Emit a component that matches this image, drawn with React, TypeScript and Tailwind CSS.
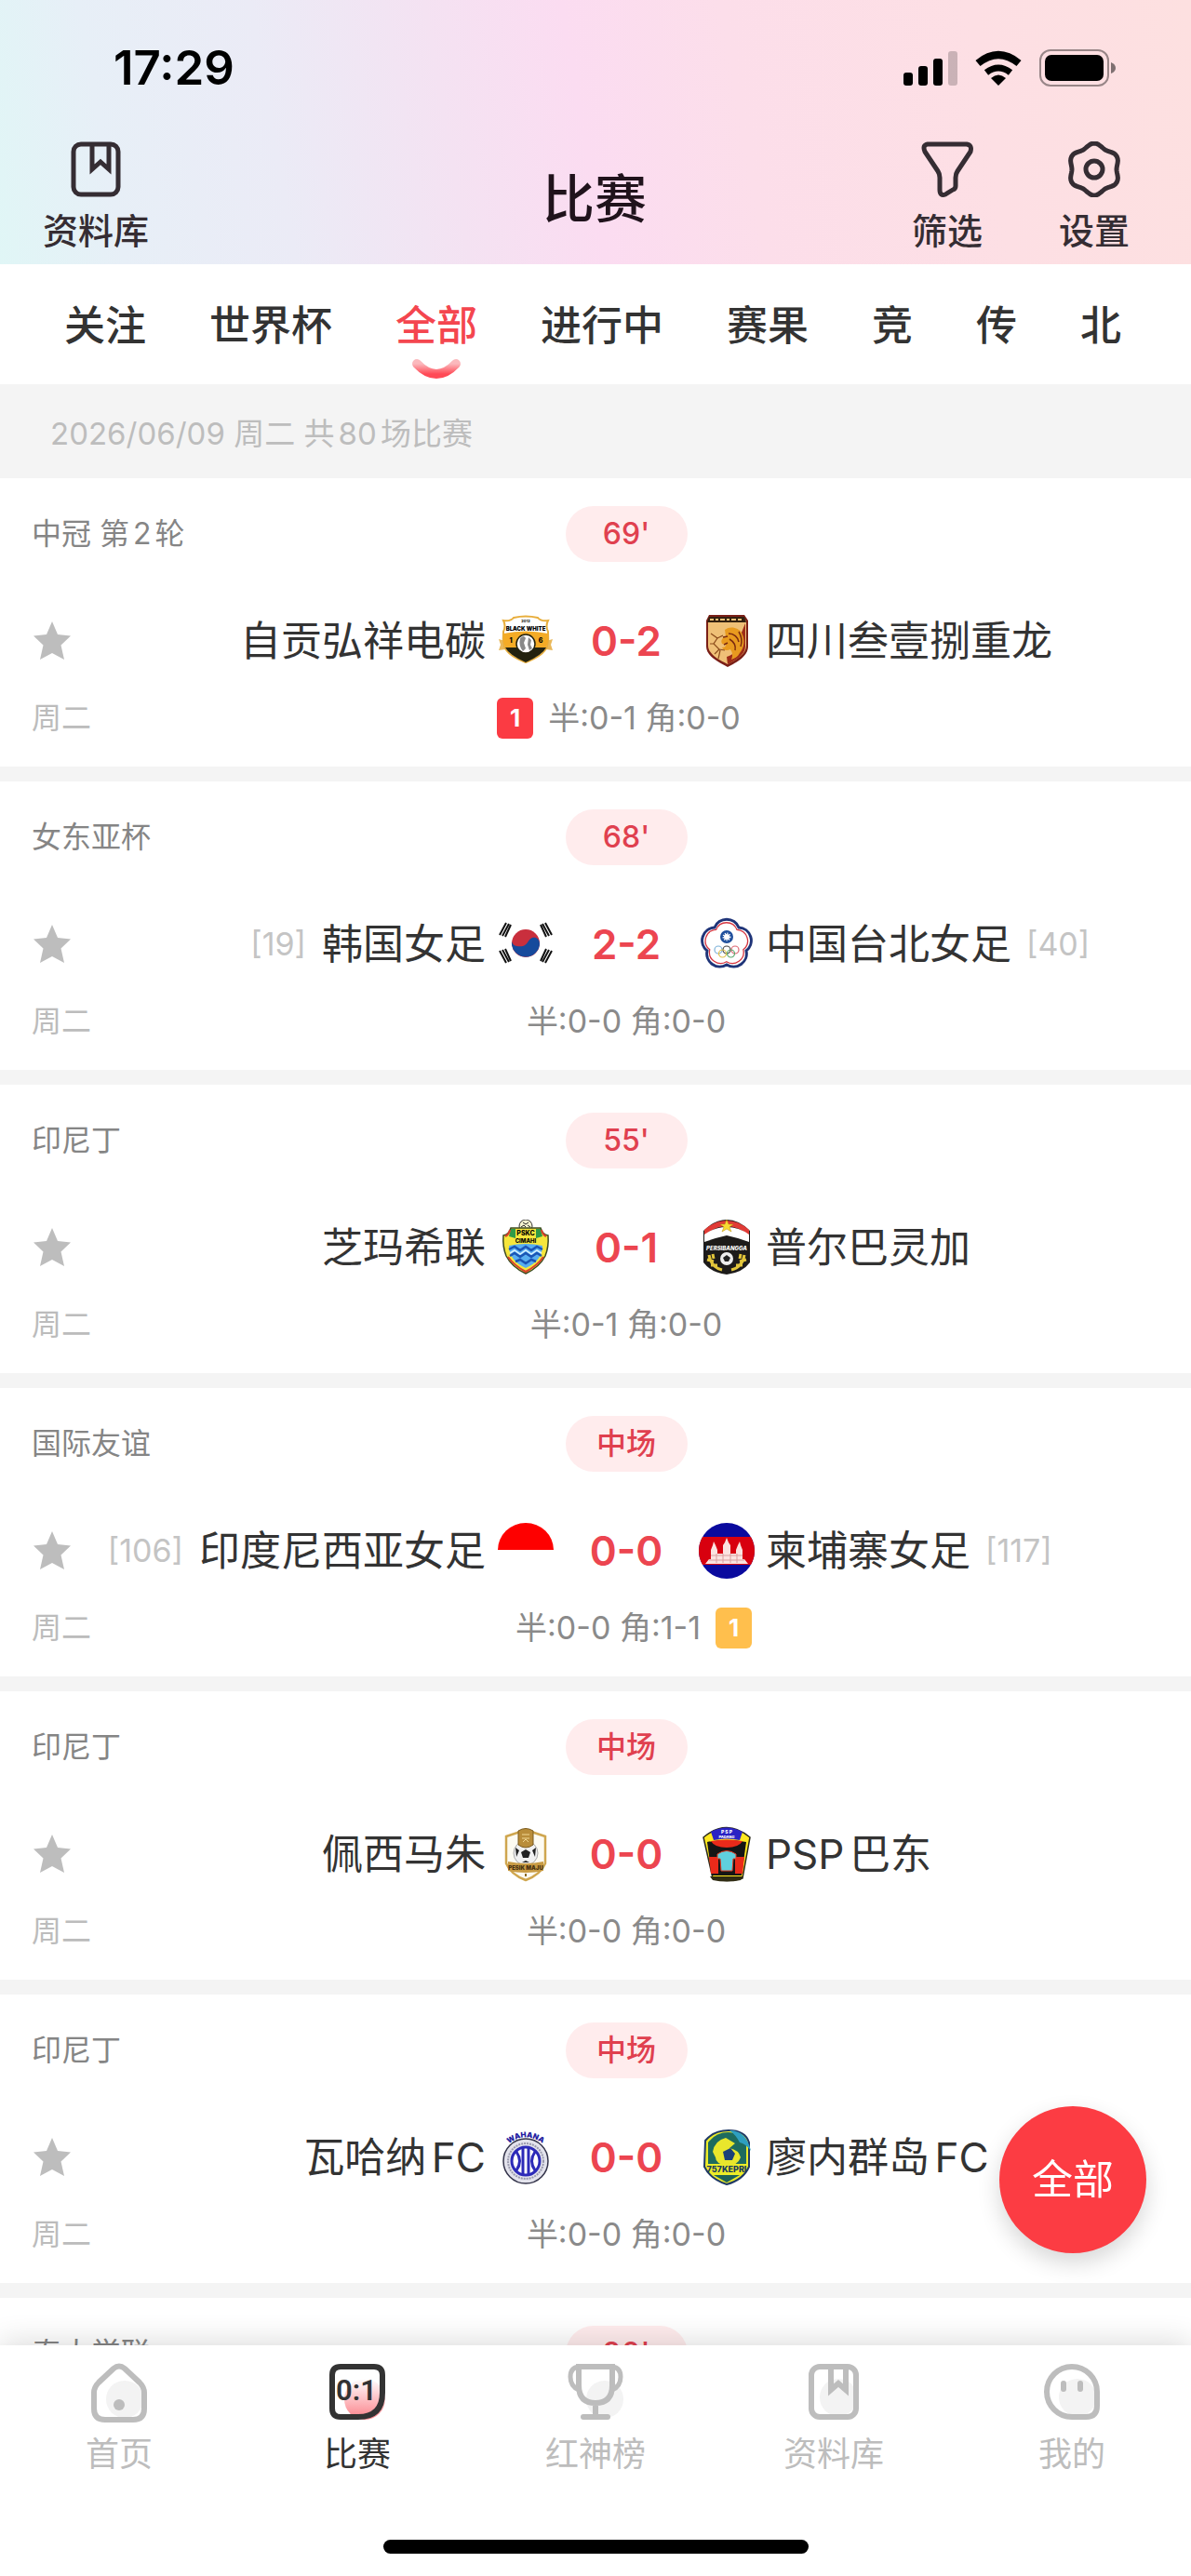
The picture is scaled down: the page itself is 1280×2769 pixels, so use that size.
import { useState } from 'react'
import type { ReactNode } from 'react'

type Team = { name: string; rank?: number; badge: ReactNode }

type Match = {
  league: string
  status: string
  home: Team
  away: Team
  score: string
  detail: string
  redCards?: number
  yellowCards?: number
}

const tabs = ['关注', '世界杯', '全部', '进行中', '赛果', '竞', '传', '北']

/* ---------- Team badges, all drawn on a 60x60 grid ---------- */

const badgeClass = 'size-[60px] shrink-0'

function BlackWhiteBadge() {
  return (
    <svg viewBox="0 0 60 60" className={badgeClass} aria-hidden="true">
      <path d="M1 28l7 2v9l-7 1 2-6zM59 28l-7 2v9l7 1-2-6z" fill="#e9b85a" />
      <path d="M6 8q8 1 11-3 13-3 26 0 3 4 11 3-3 6 0 12 1 8-1 16-4 10-23 17Q11 46 7 36q-2-8-1-16 3-6 0-12z" fill="#fff" stroke="#e8ae3c" strokeWidth="2" />
      <path d="M6 22q24-5 48 0 1 8-2 15H8q-3-7-2-15z" fill="#f4ab26" />
      <path d="M8 37h44q-4 8-22 16Q12 45 8 37z" fill="#23220f" />
      <circle cx="30" cy="33" r="10" fill="#fff" stroke="#23220f" strokeWidth="1.500" />
      <path d="M24 27q4-4 6 0l-2 5 2 6-3 3q-5-6-3-14zM33 26l3 3-1 5 2 4-3 2-2-6z" fill="#8a8a8a" />
      <text x="30" y="10" textAnchor="middle" fontSize="4" fontWeight="700" fontFamily="Inter">2012</text>
      <text x="30" y="19" textAnchor="middle" fontSize="6" fontWeight="900" fontFamily="Inter">BLACK WHITE</text>
      <text x="14" y="32" textAnchor="middle" fontSize="7" fontWeight="800" fontFamily="Inter">1</text>
      <text x="46" y="32" textAnchor="middle" fontSize="7" fontWeight="800" fontFamily="Inter">6</text>
    </svg>
  )
}

function LionBadge() {
  return (
    <svg viewBox="0 0 60 60" className={badgeClass} aria-hidden="true">
      <path d="M11 2h38l4 6v28c0 10-12 17-22 22C21 53 8 46 8 36V8z" fill="#7a1f17" />
      <path d="M12 4h36l3 5v26c0 9-10 15-20 20C21 50 10 44 10 35V9z" fill="#efc077" />
      <path d="M50 11v25c0 9-11 15-19 19l-1-8c8-2 12-8 11-14z" fill="#9d2c18" />
      <path d="M11 4h38l2 6H9z" fill="#33200f" />
      <path d="M12 7h4M18 7h3M23 7h5M30 7h3M35 7h5M42 7h4" stroke="#efc077" strokeWidth="2" />
      <path d="M28 18c6-5 15-2 18 3 4 8 3 16-2 22-2 4-6 6-9 7 2-5 1-8-1-11-4 2-8 1-9-2 3 0 4-1 4-3l-4-1c-2-4 1-7 4-8z" fill="#e89a1f" />
      <path d="M32 22c6 0 10 4 11 9M33 28c5 3 7 7 6 12M43 20c3 5 4 10 2 16M26 26l5-1M27 34l4-2" fill="none" stroke="#7a2a10" strokeWidth="1.500" />
      <path d="M13 22l7 5-4 6 6 6-5 5M20 27l6-3M22 39l6 1M12 33h4M23 40l-2 9" fill="none" stroke="#8a4a1a" strokeWidth="1.200" />
    </svg>
  )
}

function KoreaBadge() {
  return (
    <svg viewBox="0 0 60 60" className={badgeClass} aria-hidden="true">
      <circle cx="30" cy="29" r="15" fill="#c92f3d" />
      <path d="M15 27a15 15 0 1 0 30 3c0-6-4-8-8-7s-5 8-10 9-11 0-12-5z" fill="#164a9c" />
      <g stroke="#111" strokeWidth="2">
        <path d="M2 20l7-13M5 21l7-13M8 22l6-13" />
        <path d="M58 20l-7-13M55 21l-7-13M52 22l-6-13" />
        <path d="M2 37l7 13M5 36l7 13M8 35l6 13" />
        <path d="M58 37l-7 13M55 36l-7 13M52 35l-6 13" />
      </g>
    </svg>
  )
}

function TaipeiBadge() {
  const flower = 'M17 12A14 14 0 0 1 43 12A14 14 0 0 1 51 37A14 14 0 0 1 30 52A14 14 0 0 1 9 37A14 14 0 0 1 17 12z'
  return (
    <svg viewBox="0 0 60 60" className={badgeClass} aria-hidden="true">
      <path d={flower} fill="#fff" stroke="#1f3478" strokeWidth="3" />
      <path d={flower} transform="translate(4 4) scale(.86)" fill="none" stroke="#d5343f" strokeWidth="1.500" />
      <circle cx="30" cy="22" r="7" fill="#1f4f9c" />
      <circle cx="30" cy="22" r="3" fill="#fff" stroke="#fff" strokeWidth="3" strokeDasharray="1 1" />
      <g fill="none" strokeWidth="1.200">
        <circle cx="21" cy="36" r="4" stroke="#7db1d8" />
        <circle cx="30" cy="36" r="4" stroke="#444" />
        <circle cx="39" cy="36" r="4" stroke="#dc6570" />
        <circle cx="25.500" cy="40" r="4" stroke="#e2c24a" />
        <circle cx="34.500" cy="40" r="4" stroke="#5aa86c" />
      </g>
    </svg>
  )
}

function CimahiBadge() {
  return (
    <svg viewBox="0 0 60 60" className={badgeClass} aria-hidden="true">
      <circle cx="30" cy="7" r="7" fill="#f5f3d0" stroke="#333" />
      <path d="M27 3l3 2 3-2M25 8l3-2 2 2M35 8l-3-2" stroke="#222" fill="none" />
      <path d="M14 9h32q2 7 8 8 1 12-3 22-6 12-21 19Q15 51 9 39 5 29 6 17q6-1 8-8z" fill="#f6e63c" stroke="#3c4a22" strokeWidth="1.500" />
      <path d="M14 10h5v10l-7-2zM46 10h-5v10l7-2z" fill="#2f9a48" />
      <path d="M13 11q-1 5-5 7M47 11q1 5 5 7" fill="none" stroke="#d8412c" strokeWidth="2" />
      <path d="M11 40q6 9 19 16 13-7 19-16" fill="none" stroke="#d8412c" strokeWidth="2" />
      <path d="M12 28q18-4 36 0 0 16-18 24-18-8-18-24z" fill="#58aef0" />
      <path d="M12 32l6-3 6 4 6-4 6 4 6-4 6 3M13 39l5-3 6 4 6-4 6 4 6-4 5 3M19 45l5-2 6 4 6-4 5 2" fill="none" stroke="#1b55b5" strokeWidth="2.500" />
      <path d="M13 36l5-3 6 4 6-4 6 4 6-4 5 3" fill="none" stroke="#d8f0ff" strokeWidth="1.500" />
      <text x="30" y="17" textAnchor="middle" fontSize="7" fontWeight="800" fontFamily="Inter">PSKC</text>
      <text x="30" y="25" textAnchor="middle" fontSize="6" fontWeight="800" fontFamily="Inter">CIMAHI</text>
    </svg>
  )
}

function PurbalinggaBadge() {
  return (
    <svg viewBox="0 0 60 60" className={badgeClass} aria-hidden="true">
      <path d="M5 12Q17 0 30 0t25 12v34q-8 11-25 13Q13 57 5 46z" fill="#1d1b1a" />
      <path d="M6 11Q17 1 30 1t24 10v6Q42 7 30 7T6 17z" fill="#e03b36" />
      <path d="M6 16q11-8 24-8t24 8v8l-12-4-12-3-12 3-12 4z" fill="#fff" />
      <path d="M30 0l2 5h5l-4 3 2 5-5-3-5 3 2-5-4-3h5z" fill="#f7dc33" stroke="#b98d10" strokeWidth=".5" />
      <text x="30" y="33" textAnchor="middle" fontSize="6" fontWeight="800" fontFamily="Inter" fontStyle="italic" fill="#fff">PERSIBANGGA</text>
      <circle cx="30" cy="42" r="7" fill="#eee" />
      <path d="M30 38l4 3-2 4h-4l-2-4z" fill="#222" />
      <path d="M11 38q2 13 14 16M15 37l1 5M9 43l7 2M13 49l7 0M49 38q-2 13-14 16M45 37l-1 5M51 43l-7 2M47 49l-7 0" fill="none" stroke="#e2c53a" strokeWidth="3" />
    </svg>
  )
}

function IndonesiaBadge() {
  return (
    <svg viewBox="0 0 60 60" className={badgeClass} aria-hidden="true">
      <path d="M0 29a30 29 0 0 1 60 0z" fill="#fe0000" />
    </svg>
  )
}

function CambodiaBadge() {
  return (
    <svg viewBox="0 0 60 60" className={badgeClass} aria-hidden="true">
      <circle cx="30" cy="30" r="30" fill="#0a0a9e" />
      <path d="M4 15h52q8 15 0 30H4q-8-15 0-30z" fill="#d8000f" />
      <path d="M7 44l4-5h2V29l2-5 1-4 2 4 2 5v4h6V24l2-3 2-5 2 5 2 3v9h6v-4l2-5 2-4 1 4 2 5v10h2l4 5z" fill="#fbe3e0" />
      <path d="M13 35h34M11 40h38M19 33v10M26 33v10M34 33v10M41 33v10" stroke="#d9a0a0" strokeWidth="1" />
    </svg>
  )
}

function MajuBadge() {
  return (
    <svg viewBox="0 0 60 60" className={badgeClass} aria-hidden="true">
      <path d="M30 4l21 7v29q-5 12-21 18Q14 52 9 40V11z" fill="#fdfbf2" stroke="#cfa64f" strokeWidth="2.500" />
      <circle cx="30" cy="29" r="13" fill="#f1f1f1" stroke="#aaa" />
      <path d="M30 25l5 3-2 6h-6l-2-6zM19 23l4 3-3 7M41 23l-4 3 3 7M26 39l4-2 4 2" fill="#222" />
      <path d="M22 5q8-5 16 0v15q-8 6-16 0z" fill="#b98d3a" stroke="#7b5a1c" />
      <path d="M26 9h8M26 13h8M27 17l3-3 3 3" stroke="#f1d793" fill="none" />
      <path d="M11 38q19 4 38 0v10q-19 4-38 0z" fill="#c89b44" />
      <text x="30" y="47" textAnchor="middle" fontSize="6" fontWeight="900" fontFamily="Inter" fill="#4a3210">PESIK MAJU</text>
      <path d="M30 51v3" stroke="#8d6a26" strokeWidth="2" />
    </svg>
  )
}

function PadangBadge() {
  return (
    <svg viewBox="0 0 60 60" className={badgeClass} aria-hidden="true">
      <path d="M5 12Q30-9 55 12l-8 44q-17 5-32 0z" fill="#ffe81f" stroke="#2b2b1c" strokeWidth="1.500" />
      <path d="M13 6Q30-3 47 6l-3 9q-14-3-28 0z" fill="#2a22c4" />
      <text x="30" y="8" textAnchor="middle" fontSize="5" fontWeight="800" fontFamily="Inter" fill="#fff">P S P</text>
      <text x="30" y="13" textAnchor="middle" fontSize="4" fontWeight="800" fontFamily="Inter" fill="#fff">PADANG</text>
      <path d="M9 17q21-4 42 0l-5 36H14z" fill="#151515" />
      <path d="M13 16q17-3 34 0-4 7-17 7t-17-7z" fill="#ea2a1a" />
      <path d="M11 33h10v18h-8zM49 33H39v18h8z" fill="#ea2a1a" />
      <path d="M20 30q10-7 20 0v5h-3l-1 13H24l-1-13h-3z" fill="#5fd0de" stroke="#e23a22" />
      <path d="M12 54h36l-3 4q-15 3-30 0z" fill="#2f2b12" />
    </svg>
  )
}

function WahanaBadge() {
  return (
    <svg viewBox="0 0 60 60" className={badgeClass} aria-hidden="true">
      <circle cx="30" cy="34" r="24" fill="#e3e3ec" stroke="#34344a" strokeWidth="1.500" />
      <circle cx="30" cy="34" r="19" fill="none" stroke="#9a9aae" strokeWidth="2" strokeDasharray="2 1" />
      <circle cx="30" cy="34" r="15" fill="#fff" stroke="#2c2ab8" strokeWidth="3" />
      <path d="M27 20v28M33 20v28M20 24q7 10 0 20M40 24q-7 10 0 20" fill="none" stroke="#2c2ab8" strokeWidth="3" />
      <path id="wahanaArc" d="M5 21Q30-4 55 21" fill="none" />
      <text fontSize="8" fontWeight="900" fontFamily="Inter" fill="#2320a0">
        <textPath href="#wahanaArc" startOffset="50%" textAnchor="middle">WAHANA</textPath>
      </text>
    </svg>
  )
}

function KepriBadge() {
  return (
    <svg viewBox="0 0 60 60" className={badgeClass} aria-hidden="true">
      <path d="M7 12Q16 1 32 1q18 0 22 13v26q-6 14-24 19Q12 53 6 40z" fill="#ecec28" stroke="#203a66" strokeWidth="2" />
      <path d="M10 14Q18 3 32 3q16 1 19 12v22H10z" fill="#1e6b5e" />
      <path d="M33 1q18 0 23 22-6-8-12-9-4-8-11-13z" fill="#2e9fc0" />
      <path d="M15 24q2-12 14-15l10 6-6 5q10 2 12 10-3 9-15 9-12-2-12-9z" fill="#e9e62c" />
      <path d="M26 24l8-4 5 6-3 7h-8z" fill="#1b3f78" />
      <text x="30" y="46" textAnchor="middle" fontSize="9" fontWeight="800" fontFamily="Inter" fill="#173b5c">757KEPRI</text>
      <path d="M16 49h28l-14 8z" fill="#1d6257" />
    </svg>
  )
}

const matches: Match[] = [
  {
    league: '中冠 第2轮',
    status: "69'",
    home: { name: '自贡弘祥电碳', badge: <BlackWhiteBadge /> },
    away: { name: '四川叁壹捌重龙', badge: <LionBadge /> },
    score: '0-2',
    detail: '半:0-1 角:0-0',
    redCards: 1,
  },
  {
    league: '女东亚杯',
    status: "68'",
    home: { name: '韩国女足', rank: 19, badge: <KoreaBadge /> },
    away: { name: '中国台北女足', rank: 40, badge: <TaipeiBadge /> },
    score: '2-2',
    detail: '半:0-0 角:0-0',
  },
  {
    league: '印尼丁',
    status: "55'",
    home: { name: '芝玛希联', badge: <CimahiBadge /> },
    away: { name: '普尔巴灵加', badge: <PurbalinggaBadge /> },
    score: '0-1',
    detail: '半:0-1 角:0-0',
  },
  {
    league: '国际友谊',
    status: '中场',
    home: { name: '印度尼西亚女足', rank: 106, badge: <IndonesiaBadge /> },
    away: { name: '柬埔寨女足', rank: 117, badge: <CambodiaBadge /> },
    score: '0-0',
    detail: '半:0-0 角:1-1',
    yellowCards: 1,
  },
  {
    league: '印尼丁',
    status: '中场',
    home: { name: '佩西马朱', badge: <MajuBadge /> },
    away: { name: 'PSP巴东', badge: <PadangBadge /> },
    score: '0-0',
    detail: '半:0-0 角:0-0',
  },
  {
    league: '印尼丁',
    status: '中场',
    home: { name: '瓦哈纳FC', badge: <WahanaBadge /> },
    away: { name: '廖内群岛FC', badge: <KepriBadge /> },
    score: '0-0',
    detail: '半:0-0 角:0-0',
  },
]

/* ---------- Header icons ---------- */

function BookIcon() {
  return (
    <svg viewBox="0 0 60 60" className="size-[60px]" fill="none" stroke="currentColor" strokeWidth="5" aria-hidden="true">
      <rect x="6" y="3" width="48" height="54" rx="8" />
      <path d="M26 4v26l9-8 9 8V4" strokeWidth="5" />
    </svg>
  )
}

function FilterIcon() {
  return (
    <svg viewBox="0 0 60 60" className="size-[60px]" fill="none" stroke="currentColor" strokeWidth="5" strokeLinejoin="round" aria-hidden="true">
      <path d="M9 3h42q6 1 4 8L41 32q-2 3-2 7v9q0 3-3 4l-8 5q-6 2-6-5V39q0-4-2-7L6 11Q3 4 9 3z" />
    </svg>
  )
}

// Six-lobed nut outline, lobes at the top and bottom
const nutPath =
  Array.from({ length: 72 }, (_, i) => {
    const a = (i * Math.PI) / 36
    const r = 26 + 2 * Math.cos(6 * a)
    return `${i ? 'L' : 'M'}${(30 + r * Math.sin(a)).toFixed(1)} ${(30 - r * Math.cos(a)).toFixed(1)}`
  }).join('') + 'z'

function SettingsIcon() {
  return (
    <svg viewBox="0 0 60 60" className="size-[60px]" fill="none" stroke="currentColor" strokeWidth="5" strokeLinejoin="round" aria-hidden="true">
      <path d={nutPath} />
      <circle cx="30" cy="30" r="9" />
    </svg>
  )
}

function StatusBar() {
  return (
    <div className="flex h-[146px] items-center justify-between pl-[122px] pr-[81px]">
      <time className="text-[51px] leading-[60px] font-semibold text-black">17:29</time>
      <div className="flex items-center gap-[19px]">
        <svg viewBox="0 0 58 38" className="h-[38px] w-[58px]" aria-label="信号">
          <rect x="0" y="24" width="10" height="14" rx="3" />
          <rect x="16" y="17" width="10" height="21" rx="3" />
          <rect x="32" y="9" width="10" height="29" rx="3" />
          <rect x="48" y="1" width="10" height="37" rx="3" opacity=".2" />
        </svg>
        <svg viewBox="0 0 50 38" className="h-[38px] w-[50px]" fill="none" stroke="#000" strokeWidth="8" aria-label="Wi-Fi">
          <path d="M3 14Q25-4 47 14" />
          <path d="M12 24q13-10 26 0" strokeWidth="7" />
          <path d="M25 38l-8-8q8-7 16 0z" fill="#000" stroke="none" />
        </svg>
        <svg viewBox="0 0 82 40" className="h-[40px] w-[82px]" aria-label="电量">
          <rect x="1" y="1" width="73" height="38" rx="11" fill="none" stroke="#000" strokeWidth="2" opacity=".4" />
          <rect x="6" y="6" width="63" height="28" rx="7" />
          <path d="M77 14q5 2 5 6t-5 6z" opacity=".5" />
        </svg>
      </div>
    </div>
  )
}

function HeaderButton({ icon, label }: { icon: ReactNode; label: string }) {
  return (
    <button type="button" className="flex flex-col items-center gap-[12px] text-[38px] leading-[48px] font-medium text-[#352d33]">
      {icon}
      {label}
    </button>
  )
}

function Header() {
  return (
    <header className="bg-[linear-gradient(80deg,#e0f6f6_0%,#e7eff7_10%,#ebebf6_24%,#f4e2f2_38%,#fbdcf1_49%,#fcdeea_62%,#fddfe4_82%,#fde0e0_100%)]">
      <StatusBar />
      <div className="grid h-[138px] grid-cols-[1fr_auto_1fr] items-start pl-[46px] pr-[66px] pt-[6px]">
        <div className="flex">
          <HeaderButton icon={<BookIcon />} label="资料库" />
        </div>
        <h1 className="pt-[26px] pl-[18px] text-[56px] leading-[72px] font-medium text-[#20131c]">比赛</h1>
        <div className="flex justify-end gap-[82px]">
          <HeaderButton icon={<FilterIcon />} label="筛选" />
          <HeaderButton icon={<SettingsIcon />} label="设置" />
        </div>
      </div>
    </header>
  )
}

function Tabs() {
  const [active, setActive] = useState('全部')

  return (
    <nav className="flex h-[129px] gap-[68px] bg-white pl-[69px]">
      {tabs.map((tab) => (
        <button
          key={tab}
          type="button"
          onClick={() => setActive(tab)}
          className={`flex shrink-0 flex-col items-center pt-[36px] text-[44px] leading-[60px] font-medium ${
            active === tab ? 'text-[#f4464f]' : 'text-[#333]'
          }`}
        >
          {tab}
          {active === tab && (
            <svg viewBox="0 0 52 24" className="mt-[5px] h-[24px] w-[52px]" aria-hidden="true">
              <defs>
                <linearGradient id="smile" x1="0" y1="0" x2="0" y2="1">
                  <stop offset="0" stopColor="#fbb9bd" />
                  <stop offset="1" stopColor="#ff4a56" />
                </linearGradient>
              </defs>
              <path d="M5 6q21 22 42 0" fill="none" stroke="url(#smile)" strokeWidth="10" strokeLinecap="round" />
            </svg>
          )}
        </button>
      ))}
    </nav>
  )
}

function CardCount({ count, className }: { count: number; className: string }) {
  return (
    <span className={`flex h-[44px] w-[39px] items-center justify-center rounded-md text-[26px] font-bold text-white ${className}`}>
      {count}
    </span>
  )
}

function Rank({ value }: { value: number }) {
  return <span className="px-1 text-[34px] text-[#c4c4c4]">[{value}]</span>
}

const rowGrid = 'grid grid-cols-[76px_1fr_auto_1fr] items-center pr-[10px]'

function MatchCard({ match }: { match: Match }) {
  const { league, status, home, away, score, detail, redCards, yellowCards } = match

  return (
    <article className="bg-white pt-[30px] pb-[30px] whitespace-nowrap">
      <div className={rowGrid}>
        <span className="col-span-2 pl-[34px] text-[32px] text-[#858585]">{league}</span>
        <span className="flex h-[60px] w-[131px] items-center justify-center rounded-full bg-[#ffeced] text-[32px] font-medium text-[#e0404f]">
          {status}
        </span>
      </div>

      <div className={`${rowGrid} mt-[55px] text-[44px] leading-[60px] text-[#333]`}>
        <button type="button" aria-label="关注比赛" className="ml-[35px] size-[42px]">
          <svg viewBox="0 0 42 42" className="size-[42px]" fill="#bdbdbd" aria-hidden="true">
            <path d="M21 0l6 14 14 1.500-10.500 10L34 41l-13-7-13 7 3.500-15.500L1 15.500 15 14z" />
          </svg>
        </button>
        <div className="flex items-center justify-end gap-[13px]">
          {home.rank && <Rank value={home.rank} />}
          <span>{home.name}</span>
          {home.badge}
        </div>
        <strong className="w-[156px] text-center text-[44px] font-semibold text-[#ec4550]">{score}</strong>
        <div className="flex items-center gap-[12px]">
          {away.badge}
          <span>{away.name}</span>
          {away.rank && <Rank value={away.rank} />}
        </div>
      </div>

      <div className={`${rowGrid} mt-[31px] leading-[44px]`}>
        <span className="col-span-2 pl-[34px] text-[32px] text-[#bcbcbc]">周二</span>
        <div className="flex items-center text-[34px] text-[#8a8a8a]">
          {redCards && <CardCount count={redCards} className="bg-[#fb3b43]" />}
          <span className="px-[16px]">{detail}</span>
          {yellowCards && <CardCount count={yellowCards} className="bg-[#ffbf4d]" />}
        </div>
      </div>
    </article>
  )
}

/* ---------- Bottom bar ---------- */

const navItems = [
  {
    label: '首页',
    icon: (
      <>
        <circle cx="36" cy="38" r="20" fill="#f3f3f3" stroke="none" />
        <path d="M24 5q6-5 12 0l16 15q5 5 5 11v17q0 12-12 12H15Q3 60 3 48V31q0-6 5-11z" />
        <circle cx="30" cy="44" r="6" fill="currentColor" stroke="none" />
      </>
    ),
  },
  {
    label: '比赛',
    icon: (
      <>
        <defs>
          <linearGradient id="ball" x1="0" y1="0" x2="0" y2="1">
            <stop offset="0" stopColor="#fff" />
            <stop offset="1" stopColor="#fb8088" />
          </linearGradient>
        </defs>
        <circle cx="38" cy="38" r="22" fill="url(#ball)" stroke="none" />
        <path d="M12 3h36q9 0 9 9v19q0 26-26 26H12q-9 0-9-9V12q0-9 9-9z" />
        <text x="29" y="39" textAnchor="middle" fontSize="31" fontWeight="600" fontFamily="Roboto" fill="currentColor" stroke="none">0:1</text>
      </>
    ),
  },
  {
    label: '红神榜',
    icon: (
      <>
        <circle cx="40" cy="38" r="20" fill="#f3f3f3" stroke="none" />
        <path d="M12 3h36v20q0 19-18 19T12 23zM30 42v15M17 57h26" strokeLinecap="round" />
        <path d="M12 3Q3 4 3 14t9 14M48 3q9 1 9 11t-9 14" strokeWidth="5" />
      </>
    ),
  },
  {
    label: '资料库',
    icon: (
      <>
        <circle cx="35" cy="36" r="20" fill="#f3f3f3" stroke="none" />
        <rect x="6" y="3" width="48" height="54" rx="9" />
        <path d="M27 4v24l8-7 8 7V4" />
      </>
    ),
  },
  {
    label: '我的',
    icon: (
      <>
        <circle cx="36" cy="36" r="20" fill="#f3f3f3" stroke="none" />
        <path d="M30 3a27 27 0 0 1 27 27v15q0 12-12 12H30a27 27 0 0 1 0-54z" />
        <path d="M21 21v6M39 21v6" strokeLinecap="round" />
      </>
    ),
  },
]

function BottomNav() {
  return (
    <footer className="relative z-10 shrink-0 bg-white pt-[20px] pb-[24px] shadow-[0_-4px_30px_rgba(0,0,0,0.14)]">
      <nav className="grid grid-cols-5">
        {navItems.map((item) => (
          <a
            key={item.label}
            href="#"
            className={`flex flex-col items-center gap-[10px] text-[36px] leading-[48px] ${
              item.label === '比赛' ? 'text-[#333]' : 'text-[#bdbdbd]'
            }`}
          >
            <svg viewBox="0 0 60 63" className="h-[63px] w-[60px] overflow-visible" fill="none" stroke="currentColor" strokeWidth="6" aria-hidden="true">
              {item.icon}
            </svg>
            {item.label}
          </a>
        ))}
      </nav>
      <div className="mx-auto mt-[68px] h-[15px] w-[457px] rounded-full bg-black" />
    </footer>
  )
}

export default function App() {
  return (
    <div className="flex h-screen flex-col overflow-hidden bg-[#f4f4f4] font-[Inter,'Noto_Sans_CJK_SC',sans-serif] [text-autospace:normal]">
      <Header />
      <Tabs />
      <p className="h-[101px] shrink-0 pl-[54px] pt-[8px] text-[33px] leading-[90px] text-[#bdbdbd]">
        2026/06/09 周二 共80场比赛
      </p>

      <main className="flex min-h-0 flex-1 flex-col gap-[16px] overflow-hidden">
        {matches.map((match, i) => (
          <MatchCard key={i} match={match} />
        ))}
        {/* Next match, only its top edge shows above the bottom bar */}
        <article className={`${rowGrid} bg-white pt-[30px] whitespace-nowrap`}>
          <span className="col-span-2 pl-[34px] text-[32px] text-[#858585]">泰大学联</span>
          <span className="flex h-[60px] w-[131px] items-center justify-center rounded-full bg-[#ffeced] text-[32px] font-medium text-[#e0404f]">
            90'
          </span>
        </article>
      </main>

      <button
        type="button"
        className="fixed right-[48px] bottom-[347px] z-20 size-[158px] rounded-full bg-[#fc3c43] text-[44px] text-white shadow-[0_10px_24px_rgba(0,0,0,0.16)]"
      >
        全部
      </button>
      <BottomNav />
    </div>
  )
}
